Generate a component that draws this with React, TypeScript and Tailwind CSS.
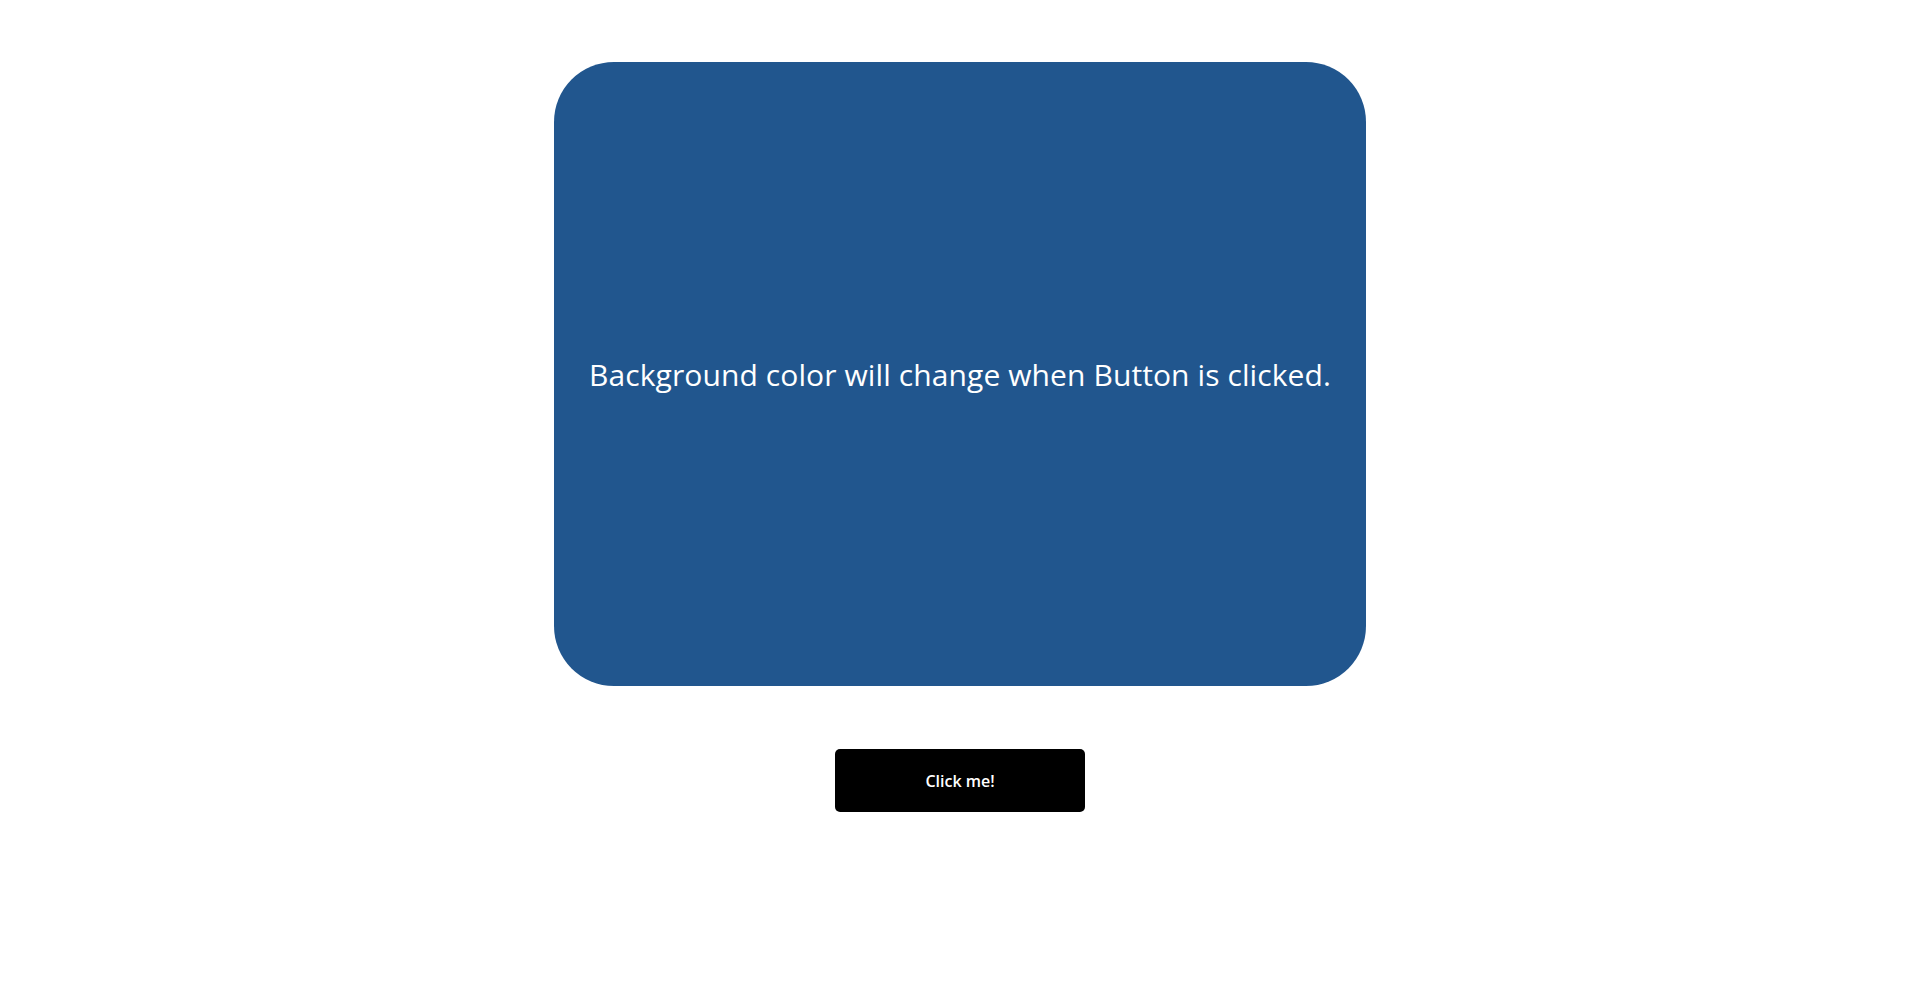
import React from "react";

export default function App() {
  return (
    <div className="min-h-screen bg-white flex flex-col items-center pt-[62px] pl-[2px]" style={{ fontFamily: '"Open Sans", "DejaVu Sans", sans-serif' }}>
      <div className="w-[812px] h-[624px] rounded-[60px] bg-[#21568e] flex items-center justify-center">
        <p className="text-white text-[30px] tracking-[0.1px]">Background color will change when Button is clicked.</p>
      </div>
      <button className="mt-[63px] w-[250px] h-[63px] rounded-[5px] bg-black text-white text-[16px] font-semibold">Click me!</button>
    </div>
  );
}
